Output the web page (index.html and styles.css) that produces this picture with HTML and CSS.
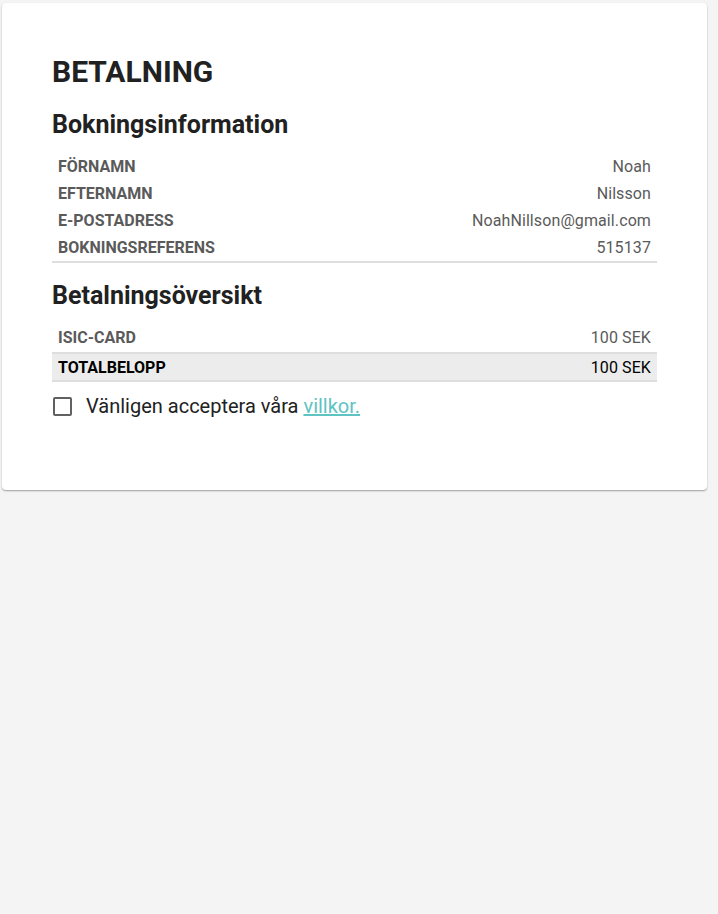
FILE: index.html
```html
<!DOCTYPE html>
<html lang="sv">
<head>
<meta charset="utf-8">
<title>Betalning</title>
<link rel="stylesheet" href="styles.css">
</head>
<body>
<main class="card">
  <h1 class="title">BETALNING</h1>
  <h2 class="section-title">Bokningsinformation</h2>
  <div class="info-table">
    <div class="row"><span class="label">FÖRNAMN</span><span class="value">Noah</span></div>
    <div class="row"><span class="label">EFTERNAMN</span><span class="value">Nilsson</span></div>
    <div class="row"><span class="label">E-POSTADRESS</span><span class="value">NoahNillson@gmail.com</span></div>
    <div class="row"><span class="label">BOKNINGSREFERENS</span><span class="value">515137</span></div>
  </div>
  <h2 class="section-title second">Betalningsöversikt</h2>
  <div class="summary-table">
    <div class="row item"><span class="label">ISIC-CARD</span><span class="value">100 SEK</span></div>
    <div class="row total"><span class="label">TOTALBELOPP</span><span class="value">100 SEK</span></div>
  </div>
  <label class="terms">
    <input type="checkbox" class="terms-input">
    <span class="box"></span>
    <span class="terms-text">Vänligen acceptera våra <a href="#" class="terms-link">villkor.</a></span>
  </label>
</main>
</body>
</html>
```

FILE: styles.css
```css
html, body {
  margin: 0;
  padding: 0;
}
body {
  background: #f4f4f4;
  font-family: Roboto, "Liberation Sans", Arial, sans-serif;
  color: #212121;
  min-height: 914px;
}
.card {
  box-sizing: border-box;
  width: 705px;
  margin: 3px 0 0 2px;
  padding: 52px 50px 71px;
  background: #fff;
  border-radius: 4px;
  box-shadow: 0 1px 2px rgba(0,0,0,0.25), 0 1px 1px rgba(0,0,0,0.12);
}
.title {
  margin: 0;
  font-size: 30px;
  line-height: 34px;
  font-weight: 700;
  color: #212121;
}
.section-title {
  margin: 21px 0 13px;
  font-size: 25px;
  line-height: 30px;
  font-weight: 700;
  color: #212121;
}
.section-title.second {
  margin-top: 18px;
  margin-bottom: 12px;
}
.info-table {
  border-bottom: 2px solid #dedede;
}
.row {
  display: flex;
  justify-content: space-between;
  align-items: center;
  height: 27px;
  padding: 0 6px;
  font-size: 16px;
}
.row.item {
  height: 28px;
}
.label {
  font-weight: 700;
  color: #5a5a5a;
}
.value {
  color: #5a5a5a;
  letter-spacing: 0.1px;
}
.summary-table .row.total {
  height: 26px;
  margin-top: 1px;
  background: #ececec;
  border-top: 2px solid #dedede;
  border-bottom: 2px solid #dedede;
}
.row.total .label,
.row.total .value {
  color: #000;
}
.terms {
  display: flex;
  align-items: center;
  margin-top: 11px;
  cursor: pointer;
}
.terms-input {
  position: absolute;
  opacity: 0;
  width: 0;
  height: 0;
  margin: 0;
}
.box {
  box-sizing: border-box;
  width: 19px;
  height: 19px;
  margin-left: 1px;
  border: 2px solid #616161;
  border-radius: 2px;
  flex: none;
}
.terms-text {
  margin-left: 14px;
  font-size: 20px;
  line-height: 26px;
  color: #212121;
}
.terms-link {
  color: #5ec3c3;
  text-decoration: underline;
}
```
